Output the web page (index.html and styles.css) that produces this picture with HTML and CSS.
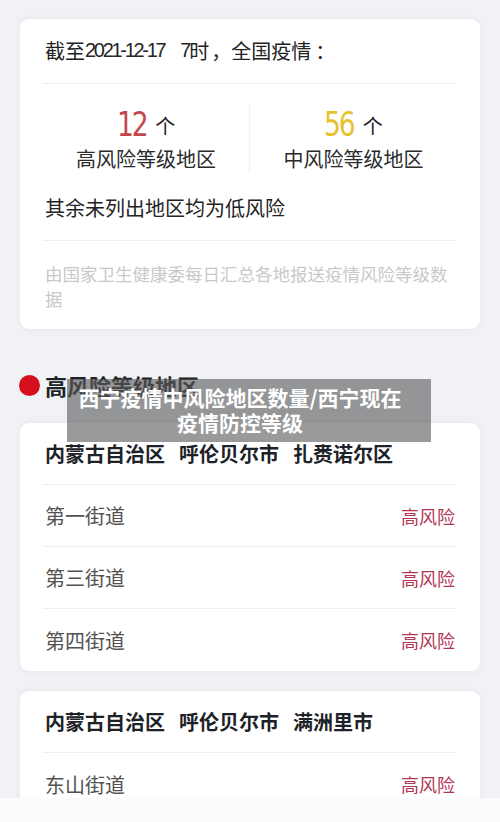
FILE: index.html
```html
<!DOCTYPE html>
<html lang="zh-CN">
<head>
<meta charset="utf-8">
<title>西宁疫情中风险地区数量</title>
<link rel="stylesheet" href="styles.css">
</head>
<body>
<main class="page">
  <section class="card summary">
    <div class="summary-head">截至<span class="digits">2021-12-17</span><span class="gap"></span><span class="digits">7</span>时<span class="comma">，</span>全国疫情<span class="colon">：</span></div>
    <div class="stats">
      <div class="stat">
        <div class="stat-num"><span class="num high">12</span><span class="unit">个</span></div>
        <div class="stat-label">高风险等级地区</div>
      </div>
      <div class="stat">
        <div class="stat-num"><span class="num mid">56</span><span class="unit">个</span></div>
        <div class="stat-label">中风险等级地区</div>
      </div>
    </div>
    <div class="summary-note">其余未列出地区均为低风险</div>
    <div class="summary-source">由国家卫生健康委每日汇总各地报送疫情风险等级数据</div>
  </section>

  <h2 class="section-title"><span class="dot"></span>高风险等级地区</h2>

  <section class="card list">
    <div class="list-head">内蒙古自治区<span class="sp"></span>呼伦贝尔市<span class="sp"></span>扎赉诺尔区</div>
    <div class="row"><span class="street">第一街道</span><span class="risk">高风险</span></div>
    <div class="row"><span class="street">第三街道</span><span class="risk">高风险</span></div>
    <div class="row"><span class="street">第四街道</span><span class="risk">高风险</span></div>
  </section>

  <section class="card list">
    <div class="list-head">内蒙古自治区<span class="sp"></span>呼伦贝尔市<span class="sp"></span>满洲里市</div>
    <div class="row"><span class="street">东山街道</span><span class="risk">高风险</span></div>
  </section>
</main>

<div class="caption">西宁疫情中风险地区数量/西宁现在<br>疫情防控等级</div>
<div class="bottom-strip"></div>
</body>
</html>
```

FILE: styles.css
```css
* { box-sizing: border-box; }

html, body {
  margin: 0;
  padding: 0;
}

body {
  background: #f0f2f6;
  font-family: "Noto Sans CJK SC", "Noto Sans", sans-serif;
  color: #262626;
}

.page {
  padding: 19px 20px 0;
}

.card {
  background: #ffffff;
  border-radius: 9px;
  padding: 0 23px;
  box-shadow: 0 0 6px rgba(200, 205, 215, 0.25);
}

/* summary card */
.summary-head {
  height: 65px;
  display: flex;
  align-items: center;
  padding-left: 2px;
  padding-bottom: 1px;
  font-size: 20px;
  color: #232323;
  border-bottom: 1px solid #eceef1;
  white-space: pre;
}

.digits {
  font-family: "Liberation Sans", sans-serif;
  font-size: 20px;
  letter-spacing: -2.3px;
  color: #262626;
}

.gap {
  display: inline-block;
  width: 16px;
}

.comma {
  display: inline-block;
  width: 22px;
  text-align: right;
}

.colon {
  display: inline-block;
  width: 20px;
  text-align: center;
  padding-left: 4px;
}

.stats {
  display: grid;
  grid-template-columns: 1fr 1fr;
  padding-top: 20px;
}

.stat {
  display: flex;
  flex-direction: column;
  align-items: center;
}

.stat:first-child {
  border-right: 1px solid #f0f0f2;
}

.stat-num {
  height: 40px;
  display: flex;
  align-items: center;
  gap: 9px;
}

.num {
  font-family: "DejaVu Sans", sans-serif;
  font-size: 34px;
  line-height: 40px;
  letter-spacing: -3px;
  transform: scaleX(0.78);
  margin: 0 -4px;
  display: inline-block;
}

.num.high { color: #c4464c; }
.num.mid { color: #e8c12c; }

.unit {
  font-size: 20px;
  line-height: 40px;
  color: #222;
  padding-top: 4px;
}

.stat-label {
  height: 29px;
  line-height: 29px;
  font-size: 20px;
  color: #2a2a2a;
}

.summary-note {
  margin-top: 20px;
  padding: 0 2px 17px;
  line-height: 30px;
  font-size: 20px;
  color: #232323;
  border-bottom: 1px solid #eceef1;
}

.summary-source {
  padding: 20px 2px 18px;
  font-size: 17.5px;
  line-height: 25px;
  color: #c9c9c9;
}

/* section title */
.section-title {
  margin: 41px 0 23px;
  display: flex;
  align-items: center;
  gap: 5px;
  font-size: 22px;
  line-height: 30px;
  font-weight: 700;
  color: #1f2329;
}

.dot {
  width: 21px;
  height: 21px;
  border-radius: 50%;
  background: #d60f1c;
  margin-left: -1px;
}

/* list cards */
.list {
  margin-bottom: 20px;
}

.list-head,
.row {
  height: 62px;
  display: flex;
  align-items: center;
  padding: 0 2px;
}

.list-head {
  font-size: 20px;
  font-weight: 700;
  color: #1d2228;
  height: 61px;
  padding-bottom: 1px;
}

.sp {
  display: inline-block;
  width: 14px;
}

.row {
  justify-content: space-between;
  border-top: 1px solid #eceef1;
}

.row:last-child {
  height: 63px;
}

.street {
  font-size: 20px;
  color: #525252;
}

.risk {
  font-size: 18px;
  color: #b43553;
}

/* overlay caption */
.caption {
  position: absolute;
  left: 67px;
  top: 379px;
  width: 364px;
  height: 63px;
  padding: 6px 18px 0 0;
  background: rgba(92, 92, 92, 0.62);
  color: #ffffff;
  font-size: 21px;
  font-weight: 700;
  line-height: 25px;
  text-align: center;
}

.bottom-strip {
  position: fixed;
  left: 0;
  right: 0;
  bottom: 0;
  height: 24px;
  background: #fafbfc;
}
```
